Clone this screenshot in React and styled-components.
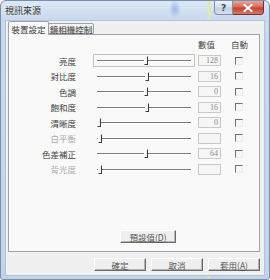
import styled, { createGlobalStyle } from "styled-components";

const GlobalStyle = createGlobalStyle`
  html, body {
    margin: 0;
    padding: 0;
  }
  body {
    width: 270px;
    height: 280px;
    overflow: hidden;
    background: #ffffff;
    font-family: "Noto Sans CJK TC", "Noto Sans", sans-serif;
  }
`;

const Window = styled.div`
  box-sizing: border-box;
  width: 270px;
  height: 280px;
  display: flex;
  flex-direction: column;
  padding: 0 4px 3px 4px;
  border: 1px solid #7b8ea8;
  border-radius: 6px 6px 3px 3px;
  background:
    radial-gradient(ellipse 6px 9px at 174px 8px, rgba(110, 150, 220, 0.55), transparent),
    linear-gradient(to right, transparent 206px, rgba(230, 236, 150, 0.7) 207px, rgba(230, 236, 150, 0.7) 209px, transparent 210px),
    linear-gradient(to bottom, #dce8f5 0px, #c9daee 18px, #c2d4ea 100%);
`;

const TitleBar = styled.div`
  height: 19px;
  display: flex;
  align-items: flex-start;
  justify-content: space-between;
`;

const Title = styled.span`
  margin-top: 4px;
  font-size: 9px;
  line-height: 11px;
  color: #2a2a2a;
  text-shadow: 0 0 3px rgba(255, 255, 255, 0.9);
`;

const CaptionButtons = styled.div`
  display: flex;
  margin-right: 1px;
`;

const CaptionButton = styled.div`
  box-sizing: border-box;
  height: 14px;
  width: ${(p) => (p.close ? "31px" : "19px")};
  display: flex;
  align-items: center;
  justify-content: center;
  border: 1px solid ${(p) => (p.close ? "#7a2e26" : "#7f8fa6")};
  border-top: none;
  border-left-width: ${(p) => (p.close ? "0" : "1px")};
  border-radius: ${(p) => (p.close ? "0 0 4px 0" : "0 0 0 4px")};
  background: ${(p) =>
    p.close
      ? "linear-gradient(to bottom, #e7a79c 0%, #d4665a 48%, #c3402f 52%, #d47a6c 100%)"
      : "linear-gradient(to bottom, #edf2f8 0%, #d3deeb 48%, #c2d0e1 52%, #d3dfec 100%)"};
  color: ${(p) => (p.close ? "#ffffff" : "#3a4658")};
  font-family: "DejaVu Sans", sans-serif;
  font-size: 9px;
  font-weight: bold;
`;

const Client = styled.div`
  flex: 1;
  display: flex;
  flex-direction: column;
  border: 1px solid #b3c3d8;
  background: #f0f0f0;
`;

const TabStrip = styled.div`
  height: 13px;
  display: flex;
  align-items: flex-end;
  margin-left: 2px;
  position: relative;
  z-index: 1;
`;

const Tab = styled.div`
  box-sizing: border-box;
  width: ${(p) => p.w}px;
  height: ${(p) => (p.active ? "14px" : "11px")};
  margin-bottom: ${(p) => (p.active ? "-1px" : "0")};
  margin-left: ${(p) => (p.active ? "0" : "-1px")};
  display: flex;
  align-items: center;
  justify-content: center;
  border: 1px solid #9ea2a9;
  border-bottom: ${(p) => (p.active ? "none" : "1px solid #9ea2a9")};
  border-radius: 2px 2px 0 0;
  background: ${(p) =>
    p.active ? "#f9f9f9" : "linear-gradient(to bottom, #f4f4f4, #e2e2e2)"};
  font-size: 8.5px;
  line-height: 10px;
  color: #3a3a3a;
`;

const Panel = styled.div`
  box-sizing: border-box;
  width: 252px;
  height: 218px;
  margin-left: 2px;
  display: flex;
  flex-direction: column;
  border: 1px solid #9ea2a9;
  background: #f9f9f9;
`;

const HeaderRow = styled.div`
  height: 18px;
  display: flex;
  align-items: center;
  padding-left: 189px;
  font-size: 8.5px;
  color: #474747;
`;

const HeaderCell = styled.span`
  margin-left: ${(p) => p.gap}px;
  line-height: 10px;
`;

const Row = styled.div`
  height: 15.5px;
  display: flex;
  align-items: center;
`;

const Label = styled.span`
  width: 67px;
  text-align: right;
  font-size: 8.5px;
  line-height: 10px;
  color: ${(p) => (p.disabled ? "#ababab" : "#404040")};
`;

const Slider = styled.div`
  box-sizing: border-box;
  position: relative;
  width: 102px;
  height: 13px;
  margin-left: 17px;
  padding: 0 3px;
  display: flex;
  align-items: center;
  border: 1px solid ${(p) => (p.focused ? "#c4c4c4" : "transparent")};
`;

const Track = styled.div`
  flex: 1;
  height: 1px;
  background: #7c7c7c;
  box-shadow: 0 1px 0 #ffffff;
`;

const Thumb = styled.div`
  box-sizing: border-box;
  position: absolute;
  top: 1px;
  width: 4px;
  height: 9px;
  background: #f2f2f2;
  border-top: 1px solid #ffffff;
  border-left: 1px solid #ffffff;
  border-right: 1px solid #3c3c3c;
  border-bottom: 1px solid #3c3c3c;
`;

const ValueBox = styled.div`
  box-sizing: border-box;
  width: 23px;
  height: 11px;
  margin-left: 3px;
  padding-right: 2px;
  border: 1px solid #c9c9c9;
  background: #f6f6f6;
  text-align: right;
  font-family: "Liberation Serif", serif;
  font-size: 8px;
  line-height: 9px;
  color: #8a8a8a;
`;

const Check = styled.div`
  box-sizing: border-box;
  width: 8px;
  height: 8px;
  margin-left: 14px;
  border-top: 1px solid #6f6f6f;
  border-left: 1px solid #6f6f6f;
  border-right: 1px solid #ececec;
  border-bottom: 1px solid #ececec;
  background: #f7f7f7;
`;

const PanelFooter = styled.div`
  margin-top: auto;
  padding: 0 0 8px 111px;
  display: flex;
`;

const Button = styled.div`
  box-sizing: border-box;
  width: ${(p) => p.w}px;
  height: 13px;
  display: flex;
  align-items: center;
  justify-content: center;
  border-top: 1px solid #ffffff;
  border-left: 1px solid #ffffff;
  border-right: 1px solid #6a6a6a;
  border-bottom: 1px solid #6a6a6a;
  box-shadow: inset -1px -1px 0 #b4b4b4;
  background: #efefef;
  font-size: 8.5px;
  line-height: 10px;
  color: #555555;

  u {
    text-decoration: underline;
  }
`;

const ButtonBar = styled.div`
  margin-top: 6px;
  padding-right: 4px;
  display: flex;
  justify-content: flex-end;
  gap: 5px;
`;

const rows = [
  { label: "亮度", value: "128", thumb: 50, focused: true },
  { label: "對比度", value: "16", thumb: 51 },
  { label: "色調", value: "0", thumb: 50 },
  { label: "飽和度", value: "16", thumb: 51 },
  { label: "清晰度", value: "0", thumb: 3 },
  { label: "白平衡", value: "", thumb: 4, disabled: true },
  { label: "色差補正", value: "64", thumb: 50 },
  { label: "背光度", value: "", thumb: 4, disabled: true },
];

function CloseIcon() {
  return (
    <svg width="10" height="8" viewBox="0 0 10 8">
      <path d="M1.5 1 L8.5 7 M8.5 1 L1.5 7" stroke="#ffffff" strokeWidth="2" strokeLinecap="square" />
    </svg>
  );
}

export default function App() {
  return (
    <>
      <GlobalStyle />
      <Window>
        <TitleBar>
          <Title>視訊來源</Title>
          <CaptionButtons>
            <CaptionButton>?</CaptionButton>
            <CaptionButton close>
              <CloseIcon />
            </CaptionButton>
          </CaptionButtons>
        </TitleBar>
        <Client>
          <TabStrip>
            <Tab active w={41}>裝置設定</Tab>
            <Tab w={46}>鏡相機控制</Tab>
          </TabStrip>
          <Panel>
            <HeaderRow>
              <HeaderCell gap={0}>數值</HeaderCell>
              <HeaderCell gap={16}>自動</HeaderCell>
            </HeaderRow>
            {rows.map((r) => (
              <Row key={r.label}>
                <Label disabled={r.disabled}>{r.label}</Label>
                <Slider focused={r.focused}>
                  <Track />
                  <Thumb style={{ left: r.thumb + "px" }} />
                </Slider>
                <ValueBox>{r.value}</ValueBox>
                <Check />
              </Row>
            ))}
            <PanelFooter>
              <Button w={56}>
                預設值(<u>D</u>)
              </Button>
            </PanelFooter>
          </Panel>
          <ButtonBar>
            <Button w={52}>確定</Button>
            <Button w={52}>取消</Button>
            <Button w={52}>
              套用(<u>A</u>)
            </Button>
          </ButtonBar>
        </Client>
      </Window>
    </>
  );
}
